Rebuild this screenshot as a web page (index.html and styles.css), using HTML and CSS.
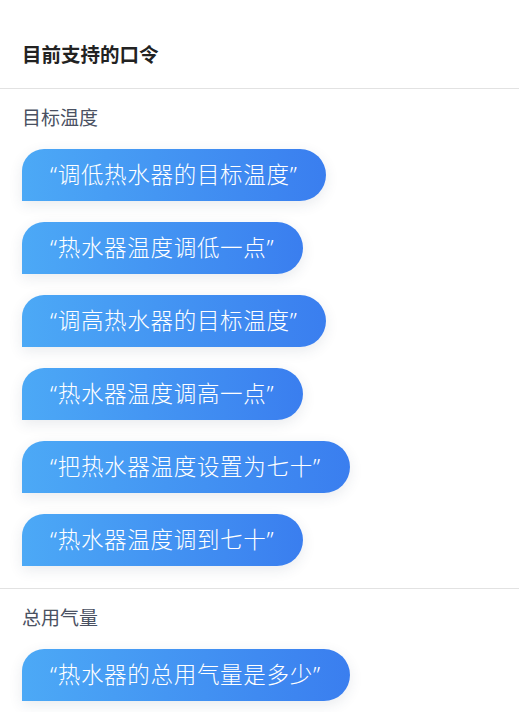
FILE: index.html
```html
<!DOCTYPE html>
<html lang="zh-CN">
<head>
  <meta charset="UTF-8">
  <meta name="viewport" content="width=device-width, initial-scale=1.0">
  <title>目前支持的口令</title>
  <link rel="stylesheet" href="styles.css">
</head>
<body>

<div class="page">
  <div class="page-header">目前支持的口令</div>

  <!-- 目标温度 -->
  <div class="section">
    <div class="section-title">目标温度</div>
    <div class="commands">
      <div class="bubble">“调低热水器的目标温度”</div>
      <div class="bubble">“热水器温度调低一点”</div>
      <div class="bubble">“调高热水器的目标温度”</div>
      <div class="bubble">“热水器温度调高一点”</div>
      <div class="bubble">“把热水器温度设置为七十”</div>
      <div class="bubble">“热水器温度调到七十”</div>
    </div>
  </div>

  <!-- 总用气量 -->
  <div class="section">
    <div class="section-title">总用气量</div>
    <div class="commands">
      <div class="bubble">“热水器的总用气量是多少”</div>
    </div>
  </div>
</div>

</body>
</html>
```

FILE: styles.css
```css
body {
  margin: 0;
  padding: 0;
  background-color: #fff;
  font-family: "Noto Sans", "Noto Sans CJK SC", sans-serif;
  overflow: hidden;
}

.page {
  width: 100%;
}

.page-header {
  height: 89px;
  box-sizing: border-box;
  display: flex;
  align-items: center;
  padding: 18px 22px 0;
  font-size: 19.5px;
  font-weight: bold;
  color: #222;
  border-bottom: 1px solid #e2e2e2;
}

.section {
  padding: 16px 0 22px;
  border-bottom: 1px solid #e2e2e2;
}

.section:last-child {
  border-bottom: none;
}

.section-title {
  padding: 0 22px;
  font-size: 19px;
  line-height: 26px;
  color: #4a5162;
}

.commands {
  display: flex;
  flex-direction: column;
  align-items: flex-start;
  gap: 21px;
  padding: 18px 22px 0;
}

.bubble {
  height: 52px;
  line-height: 52px;
  padding: 0 29px 0 28px;
  font-size: 22.5px;
  font-weight: 300;
  letter-spacing: 0.7px;
  color: #fff;
  white-space: nowrap;
  background: linear-gradient(90deg, #4ca9f6, #3a7eef);
  border-radius: 22px 26px 26px 0;
  box-shadow: 0 4px 14px rgba(40, 60, 90, 0.1);
}
```
